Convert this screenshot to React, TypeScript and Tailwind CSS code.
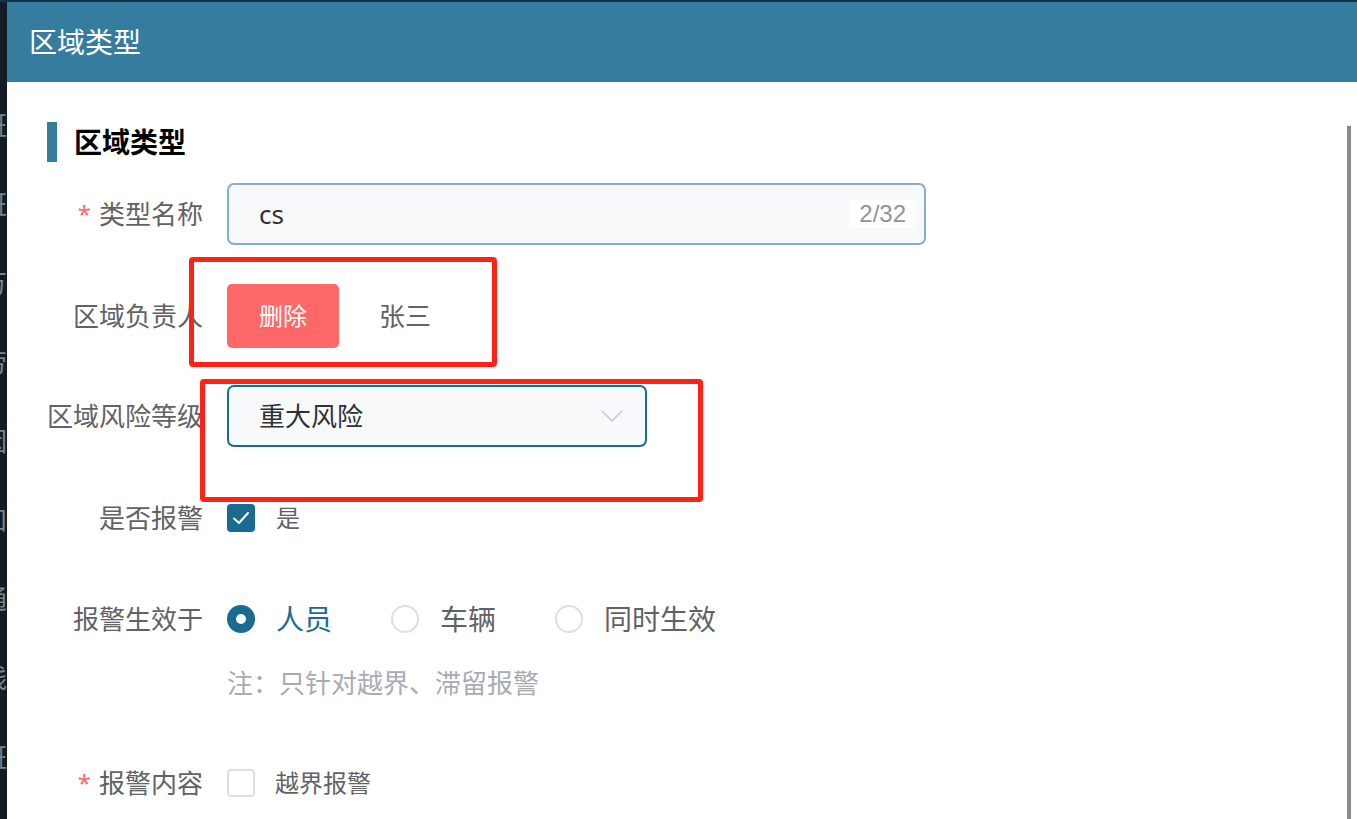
import React from "react";

const FONT = "font-['Noto_Sans','Noto_Sans_CJK_SC',sans-serif]";

const sideChars = ["班", "班", "万", "劳", "因", "知", "通", "线", "班"];

function Label({ text, required }: { text: string; required?: boolean }) {
  return (
    <div className="w-[196px] shrink-0 flex items-center justify-end pr-0 text-[26px] leading-[30px] text-[#606266] whitespace-nowrap">
      {required && <span className="text-[#f56c6c] mr-[8px] text-[24px]">*</span>}
      <span>{text}</span>
    </div>
  );
}

function Radio({ label, checked }: { label: string; checked?: boolean }) {
  return (
    <div className="flex items-center mr-[59px]">
      {checked ? (
        <span className="w-[28px] h-[28px] rounded-full bg-[#1a6b92] flex items-center justify-center">
          <span className="w-[10px] h-[10px] rounded-full bg-white" />
        </span>
      ) : (
        <span className="w-[28px] h-[28px] rounded-full border-2 border-[#dcdfe6] bg-white" />
      )}
      <span
        className={`ml-[21px] text-[28px] leading-[32px] ${
          checked ? "text-[#1a6b92]" : "text-[#606266]"
        }`}
      >
        {label}
      </span>
    </div>
  );
}

export default function App() {
  return (
    <div className={`w-[1357px] h-[819px] overflow-hidden bg-[#0f1a22] flex flex-col ${FONT}`}>
      {/* top edge of the page behind the dialog */}
      <div className="h-[2px] bg-[#0f3347] shrink-0" />
      <div className="flex flex-1 min-h-0">
        {/* sliver of the underlying side menu */}
        <div className="w-[7px] shrink-0 overflow-hidden flex flex-col pt-[110px] gap-[53px] bg-[#111c24]">
          {sideChars.map((c, i) => (
            <div key={i} className="h-[26px] leading-[26px] text-[26px] text-[#7d8388] ml-[-19px] whitespace-nowrap">
              {c}
            </div>
          ))}
        </div>

        {/* dialog */}
        <div className="flex-1 flex flex-col bg-white min-w-0">
          <div className="h-[80px] shrink-0 bg-[#357c9e] flex items-center pl-[22px]">
            <span className="text-white text-[28px] leading-[32px]">区域类型</span>
          </div>

          <div className="flex flex-1 min-h-0 relative">
            <div className="flex-1 flex flex-col">
              {/* section heading */}
              <div className="mt-[40px] h-[40px] flex items-center pl-[40px]">
                <span className="w-[10px] h-[40px] bg-[#357c9e]" />
                <span className="ml-[17px] text-[28px] font-bold text-black leading-[32px]">区域类型</span>
              </div>

              {/* 类型名称 */}
              <div className="mt-[21px] h-[62px] flex items-center">
                <Label text="类型名称" required />
                <div className="ml-[24px] w-[699px] h-[62px] rounded-[7px] border-2 border-[#86aecb] bg-[#f7f9fb] flex items-center pl-[30px] pr-[8px]">
                  <span className="flex-1 text-[26px] text-[#303133] leading-[30px]">cs</span>
                  <span className="bg-white px-[10px] h-[28px] flex items-center text-[24px] text-[#909399] font-['Liberation_Sans',Arial,sans-serif]">
                    2/32
                  </span>
                </div>
              </div>

              {/* 区域负责人 */}
              <div className="mt-[39px] h-[64px] flex items-center">
                <Label text="区域负责人" />
                <div className="ml-[24px] flex items-center">
                  <button className="w-[112px] h-[64px] rounded-[5px] bg-[#ff6868] text-white text-[24px] leading-[28px]">
                    删除
                  </button>
                  <span className="ml-[40px] text-[26px] text-[#606266] leading-[30px]">张三</span>
                </div>
              </div>

              {/* 区域风险等级 */}
              <div className="mt-[37px] h-[62px] flex items-center">
                <Label text="区域风险等级" />
                <div className="ml-[24px] w-[420px] h-[62px] rounded-[7px] border-2 border-[#1d6a90] bg-[#f7f9fb] flex items-center pl-[30px] pr-[22px]">
                  <span className="flex-1 text-[26px] text-[#303133] leading-[30px]">重大风险</span>
                  <svg width="22" height="12" viewBox="0 0 22 12" fill="none">
                    <path d="M1 1 L11 11 L21 1" stroke="#c6cad2" strokeWidth="1.6" />
                  </svg>
                </div>
              </div>

              {/* 是否报警 */}
              <div className="mt-[57px] h-[28px] flex items-center">
                <Label text="是否报警" />
                <div className="ml-[24px] flex items-center">
                  <span className="w-[28px] h-[28px] rounded-[4px] bg-[#1a6b92] flex items-center justify-center">
                    <svg width="20" height="16" viewBox="0 0 20 16" fill="none">
                      <path d="M3 8.5 L8 13 L17 3" stroke="white" strokeWidth="2" strokeLinecap="round" strokeLinejoin="round" />
                    </svg>
                  </span>
                  <span className="ml-[21px] text-[24px] text-[#606266] leading-[30px]">是</span>
                </div>
              </div>

              {/* 报警生效于 */}
              <div className="mt-[73px] h-[28px] flex items-center">
                <Label text="报警生效于" />
                <div className="ml-[24px] flex items-center">
                  <Radio label="人员" checked />
                  <Radio label="车辆" />
                  <Radio label="同时生效" />
                </div>
              </div>

              <div className="mt-[35px] h-[30px] flex items-center pl-[220px] text-[26px] leading-[30px] text-[#a8abb2]">
                注：只针对越界、滞留报警
              </div>

              {/* 报警内容 */}
              <div className="mt-[71px] h-[28px] flex items-center">
                <Label text="报警内容" required />
                <div className="ml-[24px] flex items-center">
                  <span className="w-[28px] h-[28px] rounded-[4px] border-2 border-[#dcdfe6] bg-white" />
                  <span className="ml-[20px] text-[24px] text-[#606266] leading-[30px]">越界报警</span>
                </div>
              </div>
            </div>

            {/* scrollbar thumb */}
            <div className="w-[4px] mt-[44px] bg-[#8a8a8a] shrink-0" />
            <div className="w-[6px] shrink-0" />

            {/* review highlight boxes */}
            <div className="absolute left-[182px] top-[175px] w-[308px] h-[110px] border-[5px] border-[#ff2116] rounded-[4px] pointer-events-none" />
            <div className="absolute left-[193px] top-[297px] w-[503px] h-[123px] border-[5px] border-[#ff2116] rounded-[4px] pointer-events-none" />
          </div>
        </div>
      </div>
    </div>
  );
}
